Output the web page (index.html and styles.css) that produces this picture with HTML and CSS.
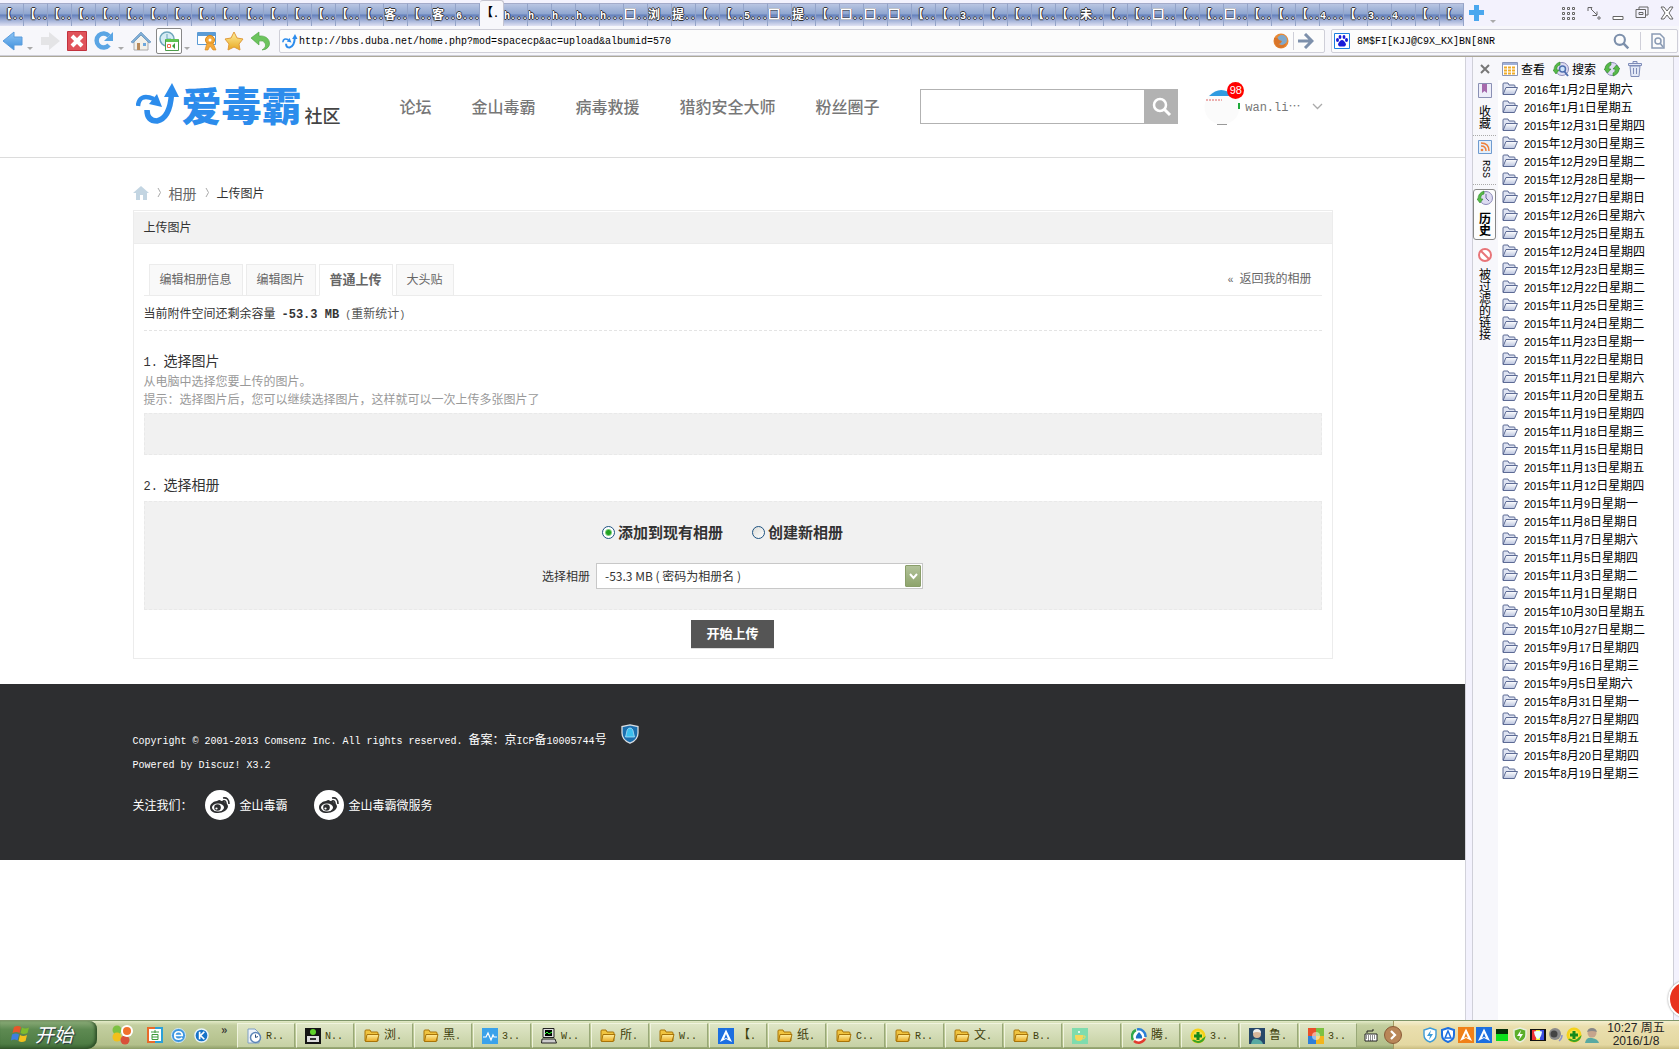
FILE: index.html
```html
<!DOCTYPE html>
<html lang="zh-CN">
<head>
<meta charset="utf-8">
<title>上传图片</title>
<link rel="stylesheet" href="styles.css">
</head>
<body>
<svg class="defs" aria-hidden="true">
  <linearGradient id="gBlue" x1="0" y1="0" x2="0" y2="1"><stop offset="0" stop-color="#8fc6f5"/><stop offset="1" stop-color="#3f8fdc"/></linearGradient>
  <linearGradient id="gGold" x1="0" y1="0" x2="0" y2="1"><stop offset="0" stop-color="#fff0a0"/><stop offset="1" stop-color="#e8a820"/></linearGradient>
  <linearGradient id="gFold" x1="0" y1="0" x2="0" y2="1"><stop offset="0" stop-color="#fff"/><stop offset="1" stop-color="#b9c3de"/></linearGradient>
  <symbol id="folder" viewBox="0 0 16 14"><path d="M1 12V2q0-1 1-1h4l1 2h5q1 0 1 1v1" fill="#dfe4f2" stroke="#5c6a94"/><path d="M1 12.500L4 5.500h11.500L12.500 12.500z" fill="url(#gFold)" stroke="#5c6a94"/></symbol>
  <symbol id="t-folder" viewBox="0 0 16 16"><path d="M1 13V3q0-1 1-1h4l1 2h6q1 0 1 1v8z" fill="#f0c440" stroke="#a87408"/><path d="M1.500 13.500L3 6.500h12L13 13.500z" fill="url(#gGold)" stroke="#a87408"/></symbol>
  <symbol id="t-doc" viewBox="0 0 16 16"><path d="M2 1h7l4 4v10H2z" fill="#eef4fb" stroke="#7f9fc4"/><circle cx="9.500" cy="9.500" r="5" fill="#fff" stroke="#5d86b8" stroke-width="1.500"/><path d="M9.500 6.500v3l2.500-1" fill="none" stroke="#2a4f80"/></symbol>
  <symbol id="t-note" viewBox="0 0 16 16"><path d="M0 0h16v16H0z" fill="#151515"/><circle cx="8" cy="4" r="3" fill="#5fd32a"/><path d="M2 8h12v6H2z" fill="#ddd"/><path d="M5 10h6v2H5z" fill="#333"/></symbol>
  <symbol id="t-chart" viewBox="0 0 16 16"><path d="M0 0h16v16H0z" fill="#3aa2ea"/><path d="M1 9h3l2-4 3 7 2-5 1 2h3" fill="none" stroke="#fff" stroke-width="1.200"/></symbol>
  <symbol id="t-pc" viewBox="0 0 16 16"><path d="M2 .5h11v9H2z" fill="#ddd" stroke="#222"/><path d="M4 2h7v6H4z" fill="#000"/><path d="M4 6l2-2 2 2 3-2" fill="none" stroke="#3f3"/><path d="M1 11h13l1.500 4H.5z" fill="#ccc" stroke="#222"/></symbol>
  <symbol id="t-duba" viewBox="0 0 16 16"><path d="M0 0h16v16H0z" fill="#1c6fe0"/><path d="M8 1.500L14 14l-6-3-6 3z" fill="#fff"/><path d="M8 6l2 5-2-1-2 1z" fill="#1c6fe0"/></symbol>
  <symbol id="t-orange" viewBox="0 0 16 16"><path d="M0 0h16v16H0z" fill="#f08018"/><path d="M8 1.500L14 14l-6-3-6 3z" fill="#fff"/><path d="M8 6l2 5-2-1-2 1z" fill="#f08018"/></symbol>
  <symbol id="t-tea" viewBox="0 0 16 16"><path d="M0 0h16v16H0z" fill="#7fdcae"/><path d="M3 7h8v2q0 4-4 4t-4-4z" fill="#f6d75c"/><path d="M11 8h2q1 2-2 3" fill="none" stroke="#f6d75c"/><circle cx="7" cy="4" r="1" fill="#fff"/></symbol>
  <symbol id="t-tx" viewBox="0 0 16 16"><circle cx="8" cy="8" r="6.500" fill="#fff"/><path d="M2 12A7 7 0 0 1 5 2" fill="none" stroke="#2fa84a" stroke-width="2.500"/><path d="M6 1.500A7 7 0 0 1 14.500 9" fill="none" stroke="#2b7fd6" stroke-width="2.500"/><path d="M14 10.500A7 7 0 0 1 3 13" fill="none" stroke="#e23b2e" stroke-width="2.500"/><path d="M8 4q4 4 3 6.500H5Q4 8 8 4z" fill="#1e6fc4"/></symbol>
  <symbol id="t-plus" viewBox="0 0 16 16"><circle cx="8" cy="8" r="7.500" fill="#f5d21a"/><path d="M2 12A7.500 7.500 0 0 0 15.500 8q-3 4-7 3z" fill="#3ba427"/><circle cx="8" cy="8" r="5" fill="#f9e14a"/><path d="M6.500 4h3v2.500H12v3H9.500V12h-3V9.500H4v-3h2.500z" fill="#158a1c"/></symbol>
  <symbol id="t-man" viewBox="0 0 16 16"><path d="M0 0h16v16H0z" fill="#27486a"/><circle cx="8" cy="6" r="4" fill="#d9b69b"/><path d="M4 5q0-4 4-4t4 4q-4-2-8 0z" fill="#eee"/><path d="M2 16q1-6 6-5t6 5z" fill="#58a9a2"/></symbol>
  <symbol id="t-man2" viewBox="0 0 16 16"><circle cx="8" cy="6" r="4.500" fill="#c6a58c"/><path d="M3 5q1-4 5-4t5 4q-5-2-10 0z" fill="#888"/><path d="M1 16q1-6 7-5t7 5z" fill="#58a9a2"/></symbol>
  <symbol id="t-colour" viewBox="0 0 16 16"><path d="M0 0h8v8H0z" fill="#e8502a"/><path d="M8 0h8v8H8z" fill="#7cc142"/><path d="M0 8h8v8H0z" fill="#2f7fd8"/><path d="M8 8h8v8H8z" fill="#f2b51d"/><circle cx="8" cy="8" r="4" fill="#fff" opacity=".5"/></symbol>
  <symbol id="s-bolt" viewBox="0 0 16 16"><path d="M8 1l6 2v5q0 5-6 7-6-2-6-7V3z" fill="#fff" stroke="#3d9bd8" stroke-width="1.400"/><path d="M9 3L5 9h3l-1 4 4-6H8z" fill="#3d9bd8"/></symbol>
  <symbol id="s-duba" viewBox="0 0 16 16"><path d="M8 1l6 2v5q0 5-6 7-6-2-6-7V3z" fill="#fff" stroke="#1c6fe0" stroke-width="2"/><path d="M8 4l3 7H5z" fill="none" stroke="#1c6fe0" stroke-width="1.500"/></symbol>
  <symbol id="s-meter" viewBox="0 0 16 16"><path d="M2 2h12v12H2z" fill="#0be01c"/><path d="M2 2h12v5H2z" fill="#042f08"/></symbol>
  <symbol id="s-green" viewBox="0 0 16 16"><path d="M8 1l6 2v5q0 5-6 7-6-2-6-7V3z" fill="#5cae2a" stroke="#e9efe0" stroke-width="1.500"/><path d="M9 3L5 9h3l-1 4 4-6H8z" fill="#fff"/></symbol>
  <symbol id="s-screen" viewBox="0 0 16 16"><path d="M0 2h16v12H0z" fill="#111"/><path d="M2 3h4v10H2z" fill="#e33"/><path d="M6 3h4v10H6z" fill="#ee3"/><path d="M10 3h4v10h-4z" fill="#3c4ee0"/><path d="M8 4q4 0 4 1-1 6-4 7-3-1-4-7 0-1 4-1z" fill="#eaffff"/></symbol>
  <symbol id="s-sound" viewBox="0 0 16 16"><circle cx="7" cy="7" r="6" fill="#8a8a8a"/><circle cx="6" cy="7" r="3.500" fill="#444"/><path d="M11 14q3-2 3-6" fill="none" stroke="#8d93c8" stroke-width="1.500"/></symbol>
  <symbol id="weibo" viewBox="0 0 30 30"><circle cx="15" cy="15" r="15" fill="#fff"/><path d="M12 11q3-2 4 0 4-1 4 2 3 1 3 3c0 4-5 7-10 7s-8-2-8-6c0-3 4-6 7-6z" fill="#2d2e30"/><ellipse cx="13" cy="17.500" rx="6" ry="4" fill="#fff"/><circle cx="12.500" cy="17.500" r="3.300" fill="#2d2e30"/><circle cx="11.500" cy="18.500" r="1.100" fill="#fff"/><path d="M18 8q6-1 6 6M18 11q3-1 3 3" fill="none" stroke="#2d2e30" stroke-width="1.600"/></symbol>
  <symbol id="swirl" viewBox="0 0 44 42"><path d="M2 23Q3 10 18 16" fill="none" stroke="#2c8cec" stroke-width="4.500"/><path d="M21 11l5 13-13-3z" fill="#2c8cec"/><path d="M11 27q0 11 10 11 13-3 14.500-27" fill="none" stroke="#2c8cec" stroke-width="5.500"/><path d="M28 14L36 0l7 14z" fill="#2c8cec"/></symbol>
  <symbol id="glass" viewBox="0 0 20 20"><circle cx="8" cy="8" r="6" fill="none" stroke="currentColor" stroke-width="2.500"/><path d="M12 12l6 6" stroke="currentColor" stroke-width="3"/></symbol>
  <symbol id="h-clock" viewBox="0 0 16 16"><circle cx="9" cy="8" r="6.500" fill="#dedcf2" stroke="#8c8ab8"/><path d="M9 4v4l3 3" fill="none" stroke="#66649a"/><path d="M7 1v3Q3 5 4 9H6L3 13 0 9h1Q1 3 7 1z" fill="#56b947" stroke="#2f8a2a" stroke-width=".6"/></symbol>
  <symbol id="h-search" viewBox="0 0 16 16"><circle cx="9" cy="8" r="6.500" fill="#dedcf2" stroke="#8c8ab8"/><circle cx="9.500" cy="8" r="3" fill="#cfe4fa" stroke="#4f6fb0" stroke-width="1.500"/><path d="M11.500 10.500L15 15" stroke="#4f6fb0" stroke-width="2"/><path d="M7 1v3Q3 5 4 9H6L3 13 0 9h1Q1 3 7 1z" fill="#56b947" stroke="#2f8a2a" stroke-width=".6"/></symbol>
  <symbol id="h-refresh" viewBox="0 0 16 16"><circle cx="8" cy="8" r="6.500" fill="#dedcf2" stroke="#8c8ab8"/><path d="M7 1v3Q4 5 5 8H7L3.500 12 0 8h1Q1 3 7 1z" fill="#56b947" stroke="#2f8a2a" stroke-width=".6"/><path d="M9 15v-3q3-1 2-4H9l3.500-4L16 8h-1q0 5-6 7z" fill="#56b947" stroke="#2f8a2a" stroke-width=".6"/></symbol>
</svg>

<nav class="tabstrip" aria-label="标签页">
  <div class="tabs" id="tabs"></div>
  <button class="plain newtab" aria-label="新标签"><svg width="15" height="16" viewBox="0 0 15 16"><path d="M5 0h5v5h5v5h-5v6H5v-6H0V5h5z" fill="#4aa7ee"/></svg></button>
  <i class="tick"></i>
  <div class="winbtns">
    <button class="plain" aria-label="菜单"><svg width="14" height="14" viewBox="0 0 14 14" fill="#fff" stroke="#666"><path d="M.5 1.500h2v2h-2zM5.500 1.500h2v2h-2zM10.500 1.500h2v2h-2zM.5 6.500h2v2h-2zM5.500 6.500h2v2h-2zM10.500 6.500h2v2h-2zM.5 11.500h2v2h-2zM5.500 11.500h2v2h-2zM10.500 11.500h2v2h-2z"/></svg></button>
    <button class="plain" aria-label="停靠"><svg width="14" height="14" viewBox="0 0 14 14" fill="none" stroke="#666"><path d="M1 5V1.500h4L4 3l6 6V5.500M10 9.500H5.500"/><circle cx="12" cy="12" r="1.200"/></svg></button>
    <button class="plain" aria-label="最小化"><svg width="12" height="14" viewBox="0 0 12 14"><path d="M1 10.500h10v3H1z" fill="#fff" stroke="#666"/></svg></button>
    <button class="plain" aria-label="还原"><svg width="14" height="14" viewBox="0 0 14 14" fill="none" stroke="#666"><path d="M4 3V1h9v8h-2M1 3.500h9.500v8H1zM4 6.500h4v2H4z"/></svg></button>
    <button class="plain" aria-label="关闭"><svg width="14" height="14" viewBox="0 0 14 14"><path d="M1 1h3l3 4 3-4h3L9 7l4 6h-3L7 9l-3 4H1l4-6z" fill="#fff" stroke="#666"/></svg></button>
  </div>
</nav>

<div class="toolbar">
  <div class="tools">
    <button class="plain" aria-label="后退"><svg width="20" height="20" viewBox="0 0 20 20"><path d="M0 10L11 1v5h8v8h-8v5z" fill="url(#gBlue)" stroke="#5a9cdc"/></svg></button><i class="tick"></i>
    <button class="plain" aria-label="前进"><svg width="20" height="20" viewBox="0 0 20 20"><path d="M20 10L9 1v5H1v8h8v5z" fill="#e4e4e6"/></svg></button>
    <button class="plain" aria-label="停止"><svg width="20" height="20" viewBox="0 0 20 20"><path d="M.5.5h19v19H.5z" fill="#e0525a" stroke="#c2323e"/><path d="M5 5l10 10M15 5L5 15" stroke="#fff" stroke-width="4"/></svg></button>
    <button class="plain" aria-label="刷新"><svg width="20" height="20" viewBox="0 0 20 20"><path d="M15 14a7 7 0 1 1 0-9" fill="none" stroke="#5aa5e4" stroke-width="4.500"/><path d="M19 1v9h-9z" fill="#5aa5e4"/></svg></button><i class="tick"></i>
    <button class="plain" aria-label="主页"><svg width="20" height="20" viewBox="0 0 20 20"><path d="M3 10v9h14v-9l-7-6z" fill="#f3f1ea" stroke="#aaa"/><path d="M0 11L10 1l10 10-2 1-8-8-8 8z" fill="#7faed6" stroke="#5b8cb8" stroke-width=".6"/><path d="M6 12h3v7H6z" fill="#b88a5a"/><path d="M12 12h3v3h-3z" fill="#6fa8dc"/></svg></button>
    <button class="plain boxed" aria-label="历史"><svg width="20" height="20" viewBox="0 0 20 20"><circle cx="8" cy="8" r="7" fill="#d6ecf4" stroke="#6fa6bc" stroke-width="1.500"/><path d="M8 3v5h4" fill="none" stroke="#6fa6bc"/><path d="M6.500 8.500h13v11h-13z" fill="#fff" stroke="#4d9d4a"/><path d="M7 8h12v3H7z" fill="#5fc450"/><path d="M8.500 13.500h3v3h-3z" fill="#fff" stroke="#f06a4a"/><path d="M13 15l3-3v6z" fill="#3b9e3a"/></svg></button><i class="tick"></i>
    <button class="plain" aria-label="认证"><svg width="20" height="20" viewBox="0 0 20 20"><path d="M.5 1.500h18v12H.5z" fill="#fff" stroke="#5b9bd5"/><path d="M1 2h17v3H1z" fill="#5b9bd5"/><circle cx="13" cy="9" r="4.500" fill="#f4a93a" stroke="#d58416"/><circle cx="13" cy="9" r="1.500" fill="#fff"/><path d="M10 12l-2 7h3l2-4 3 4h3l-3-7z" fill="#f4a93a" stroke="#d58416" stroke-width=".6"/></svg></button>
    <button class="plain" aria-label="收藏"><svg width="20" height="20" viewBox="0 0 20 20"><path d="M10 1l3 6 6 1-4 5 1 6-6-3-6 3 1-6-4-5 6-1z" fill="url(#gGold)" stroke="#e09a3a"/></svg></button>
    <button class="plain" aria-label="撤销"><svg width="20" height="20" viewBox="0 0 20 20"><path d="M0 7l8-6v4c8-1 12 5 10 10q-2 4-7 4 5-3 3-7-2-3-6-2v4z" fill="#6cc45e" stroke="#4aa03e" stroke-width=".6"/></svg></button>
  </div>
  <form class="field address">
    <svg width="16" height="15"><use href="#swirl"/></svg>
    <input class="lat" type="text" aria-label="地址" value="http://bbs.duba.net/home.php?mod=spacecp&amp;ac=upload&amp;albumid=570">
    <svg width="16" height="16" viewBox="0 0 16 16"><circle cx="8" cy="8" r="7.500" fill="#e98a35"/><circle cx="9" cy="7" r="5" fill="#7fa8cc"/><path d="M1 5q4-1 5 2l3 1q-1 3-4 3 4 3 8-1-1 5-6 5Q1 14 1 5z" fill="#d9752a"/></svg>
    <i class="vsep"></i>
    <button class="plain" type="button" aria-label="转到"><svg width="16" height="16" viewBox="0 0 16 16" fill="none" stroke="#7d90ab" stroke-width="3"><path d="M0 8h13M7 1l7 7-7 7"/></svg></button>
  </form>
  <form class="field websearch">
    <svg width="16" height="16" viewBox="0 0 16 16"><path d="M.5.5h15v15H.5z" fill="#fff" stroke="#1c7fe0"/><g fill="#1a1ad8"><ellipse cx="3.500" cy="7" rx="1.500" ry="2"/><ellipse cx="6" cy="4" rx="1.400" ry="2"/><ellipse cx="10" cy="4" rx="1.400" ry="2"/><ellipse cx="12.500" cy="7" rx="1.500" ry="2"/><path d="M8 7q2 0 4 4 0 3-4 2.500Q4 14 4 11q2-4 4-4z"/></g></svg>
    <input class="lat" type="text" aria-label="搜索网络" value="8M$FI[KJJ@C9X_KX]BN[8NR">
    <svg class="slate" width="17" height="17"><use href="#glass"/></svg>
    <i class="vsep"></i>
    <svg width="14" height="16" viewBox="0 0 14 16" fill="none" stroke="#8a9bb4" stroke-width="1.500"><path d="M1 1h8l4 4v10H1z"/><circle cx="7" cy="8" r="3"/><path d="M9 10l3 4"/></svg>
  </form>
</div>

<div class="main">
  <main class="page">
    <header class="site-head"><div class="wrap head-row">
      <a class="logo" href="#"><svg width="44" height="42"><use href="#swirl"/></svg><b>爱毒霸</b><span>社区</span></a>
      <nav class="site-nav"><a href="#">论坛</a><a href="#">金山毒霸</a><a href="#">病毒救援</a><a href="#">猎豹安全大师</a><a href="#">粉丝圈子</a></nav>
      <form class="site-search"><input type="text" aria-label="搜索"><button type="button" aria-label="搜索"><svg width="20" height="20"><use href="#glass"/></svg></button></form>
      <div class="user">
        <span class="avatar"><svg width="36" height="36" viewBox="0 0 36 36"><circle cx="18" cy="18" r="17.500" fill="#fbfbfb"/><path d="M5 7q12-12 25 0z" fill="#2f9be0"/><path d="M2 11h16" stroke="#d66" stroke-dasharray="2 1"/><path d="M34 14h2v6h-2z" fill="#1faa3a"/><path d="M13 35.500h10" stroke="#999"/></svg><em>98</em></span>
        <a class="name" href="#">wan.li<span>…</span></a>
        <svg width="11" height="7" viewBox="0 0 11 7"><path d="M1 1l4.500 4.500L10 1" fill="none" stroke="#aaa" stroke-width="1.300"/></svg>
      </div>
    </div></header>

    <div class="wrap">
      <nav class="crumbs">
        <a href="#" aria-label="首页"><svg width="16" height="14" viewBox="0 0 16 14"><path d="M8 0l8 7h-2v7h-4v-5H7v5H3V7H0z" fill="#c3d5e2"/></svg></a>
        <svg width="10" height="9" viewBox="0 0 10 9"><path d="M4 0l2.500 4.500L4 9" fill="none" stroke="#aaa"/></svg><a class="big" href="#">相册</a><svg width="10" height="9" viewBox="0 0 10 9"><path d="M4 0l2.500 4.500L4 9" fill="none" stroke="#aaa"/></svg><span>上传图片</span>
      </nav>
      <section class="card">
        <h1>上传图片</h1>
        <div class="body">
          <div class="subtabs"><a href="#">编辑相册信息</a><a href="#">编辑图片</a><a class="on" href="#">普通上传</a><a href="#">大头贴</a><a class="back" href="#"><span class="lat">« </span>返回我的相册</a></div>
          <p class="quota">当前附件空间还剩余容量<b class="lat">-53.3 MB</b><a href="#"><span class="lat">(</span>重新统计<span class="lat">)</span></a></p>
          <h2><span>1.</span>选择图片</h2>
          <p class="hint">从电脑中选择您要上传的图片。</p>
          <p class="hint">提示：选择图片后，您可以继续选择图片，这样就可以一次上传多张图片了</p>
          <div class="well drop"></div>
          <h2><span>2.</span>选择相册</h2>
          <div class="well">
            <div class="modes"><label><input type="radio" name="mode" checked>添加到现有相册</label><label><input type="radio" name="mode">创建新相册</label></div>
            <div class="pick"><label for="album">选择相册</label><span class="sel"><select id="album"><option>-53.3 MB ( 密码为相册名 )</option></select><i><svg width="9" height="7" viewBox="0 0 9 7"><path d="M1 1l3.500 4L8 1" fill="none" stroke="#fff" stroke-width="2"/></svg></i></span></div>
          </div>
          <button class="submit" type="button">开始上传</button>
        </div>
      </section>
    </div>

    <footer class="foot"><div class="wrap">
      <div class="line1"><p><span class="lat">Copyright © 2001-2013 Comsenz Inc. All rights reserved. </span></p><p>备案：京<span class="lat">ICP</span>备<span class="lat">10005744</span>号</p>
        <svg width="18" height="20" viewBox="0 0 18 20"><path d="M9 .8l8 1.700V9q0 7-8 10.200Q1 16 1 9V2.500z" fill="#1b6fae" stroke="#d8dde2" stroke-width="1.300"/><path d="M9 4q3 0 3.500 5l1 4H4.500l1-4Q6 4 9 4z" fill="#3cc0ef" stroke="#bdeaff" stroke-width=".7"/></svg></div>
      <p class="lat">Powered by Discuz! X3.2</p>
      <div class="follow"><span>关注我们：</span><a href="#"><svg width="30" height="30"><use href="#weibo"/></svg>金山毒霸</a><a href="#"><svg width="30" height="30"><use href="#weibo"/></svg>金山毒霸微服务</a></div>
    </div></footer>
  </main>

  <aside class="side">
    <div class="side-bar">
      <button class="plain close" aria-label="关闭侧栏"><svg width="10" height="10" viewBox="0 0 10 10"><path d="M1 1l8 8M9 1L1 9" stroke="#777" stroke-width="2"/></svg></button>
      <button class="plain"><svg width="16" height="14" viewBox="0 0 16 14"><path d="M.5.500h15v13H.5z" fill="#fff" stroke="#8a96b8"/><path d="M1 1h14v2H1z" fill="#9fb0d8"/><path d="M2 5.500h12M2 8.500h12M2 11.500h12" stroke="#f0ac28" stroke-width="2" stroke-dasharray="3 1"/></svg>查看</button>
      <button class="plain"><svg width="16" height="16"><use href="#h-search"/></svg>搜索</button>
      <button class="plain" aria-label="刷新历史"><svg width="16" height="16"><use href="#h-refresh"/></svg></button>
      <button class="plain" aria-label="删除"><svg width="14" height="16" viewBox="0 0 14 16"><path d="M.5 2.500h13v2H.5zM5 2.500v-2h4v2M2 5l1 10.500h8L12 5zM5.500 7v6M8.500 7v6" fill="#e3e8f6" stroke="#7f8cb8"/></svg></button>
    </div>
    <div class="side-main">
      <nav class="side-tabs">
        <a href="#"><svg width="14" height="16" viewBox="0 0 14 16"><path d="M.5.5h13v14H.5z" fill="#eeeefa" stroke="#8a90b4"/><path d="M4 1h5v9L6.500 8 4 10z" fill="#a569ac"/></svg><span>收藏</span></a>
        <a href="#"><svg width="14" height="14" viewBox="0 0 14 14"><path d="M.5.5h13v13H.5z" fill="#e4effb" stroke="#6f9bd0"/><path d="M3 6q5 0 5 5M3 3q8 0 8 8" fill="none" stroke="#f0803a" stroke-width="1.500"/><circle cx="4" cy="10" r="1.300" fill="#f0803a"/></svg><span class="lat">RSS</span></a>
        <a class="on" href="#"><svg width="16" height="16"><use href="#h-clock"/></svg><span>历史</span></a>
        <a href="#"><svg width="14" height="14" viewBox="0 0 14 14"><circle cx="7" cy="7" r="6" fill="#fff" stroke="#e87478" stroke-width="2"/><path d="M3 3l8 8" stroke="#e87478" stroke-width="2"/></svg><span>被过滤的链接</span></a>
      </nav>
      <ul class="history" id="history"></ul>
    </div>
  </aside>
  <span class="ball"></span>
</div>

<footer class="taskbar">
  <button class="start"><svg width="20" height="20" viewBox="0 0 20 20"><path d="M3 3q4-2 7 0L8.500 9q-3-2-7 0z" fill="#e8562a"/><path d="M11 3.500q3 2 7 0L16.500 9q-4 2-7 0z" fill="#7dbb2e"/><path d="M1 10.500q4-2 7 0l-1.500 6q-3-2-6.500 0z" fill="#3f7fe0"/><path d="M9 11q3 2 7 0l-1.500 6q-4 2-7 0z" fill="#f2c01c"/></svg>开始</button>
  <div class="quick">
    <svg width="22" height="20" viewBox="0 0 22 20"><circle cx="5" cy="5" r="4.500" fill="#7cc142"/><circle cx="5" cy="12" r="4.500" fill="#f2c01c"/><circle cx="13" cy="15" r="4.500" fill="#d8503a"/><circle cx="15" cy="6" r="6" fill="#fff"/><circle cx="15" cy="6" r="4" fill="#f0702a"/></svg>
    <svg class="q2" width="16" height="16" viewBox="0 0 16 16"><path d="M0 0h8v16H0z" fill="#e86a2a"/><path d="M8 0h8v16H8z" fill="#2ba0d8"/><path d="M2 2h12v12H2z" fill="#fff"/><path d="M4 5h8M8 3v3M5 7.500h6v5H5zM5 10h6" fill="none" stroke="#3c9a3a"/></svg>
    <svg width="15" height="15" viewBox="0 0 16 16"><circle cx="8" cy="8" r="7.500" fill="#3f97e0" stroke="#dceefc"/><path d="M4 8h8q0-4-4-4t-4 4 4 4q2 0 4-1.500" fill="none" stroke="#fff" stroke-width="1.800"/></svg>
    <svg width="15" height="15" viewBox="0 0 16 16"><circle cx="8" cy="8" r="7" fill="#1673c8" stroke="#e8f4fc" stroke-width="1.500"/><path d="M6 4v8M11 4L7 8l4 4" fill="none" stroke="#fff" stroke-width="1.800"/></svg>
    <span>»</span>
  </div>
  <div class="tasks" id="tasks"></div>
  <div class="lang"><svg width="14" height="14" viewBox="0 0 14 14"><path d="M1 6h12v7H1z" fill="#fff" stroke="#222"/><path d="M2 8h10M2 10h10M4 12h6" stroke="#222" stroke-dasharray="1 1"/><path d="M3 5V3h6V1" fill="none" stroke="#222"/></svg>
    <svg width="18" height="18" viewBox="0 0 18 18"><circle cx="9" cy="9" r="8.500" fill="#b98658" stroke="#8a5c38"/><path d="M7 5l4 4-4 4" fill="none" stroke="#fff" stroke-width="2.200"/></svg></div>
  <div class="tray"><div class="trayicons" id="tray"></div><time>10:27 周五<br>2016/1/8</time></div>
</footer>
<script src="app.js"></script>
</body>
</html>
```
FILE: styles.css
```css
* { box-sizing: border-box; }
body { margin: 0; min-height: 100vh; display: flex; flex-direction: column; background: #f3f2fd; color: #333; font: 12px/18px "Noto Sans CJK SC", sans-serif; }
p, h1, h2, ul { margin: 0; padding: 0; }
a { color: inherit; text-decoration: none; }
svg { display: block; flex: none; }
.defs { position: absolute; width: 0; height: 0; }
input, select, button { font: inherit; color: inherit; }
.lat { font-family: "Liberation Mono", monospace; font-size: 10px; }
.plain { background: none; border: 0; padding: 0; display: flex; align-items: center; }
.tick { width: 0; height: 0; border: 3px solid transparent; border-top-color: #aaa; border-bottom: 0; }

/* browser tabs */
.tabstrip { display: flex; align-items: center; height: 26px; }
.tabs { display: flex; align-items: flex-end; height: 26px; min-width: 0; }
.tab { flex: 0 1 24px; width: 24px; height: 23px; padding: 0; border: 0; border-top: 1px solid #a4abc9; border-right: 1px solid #93a3c8; background: linear-gradient(#b9c5e2, #8fa6d0 45%, #6480bb 50%, #a3b2d8 75%, #dfe1f3); color: #fff; font-weight: 700; text-align: left; white-space: nowrap; overflow: hidden; line-height: 20px; text-shadow: 1px 0 #333, -1px 0 #333, 0 1px #333, 0 -1px #333; }
.tab .box { -webkit-text-stroke: 1px #fff; }
.tab.on { height: 26px; background: #f7f7fb; color: #000; text-shadow: none; border-color: #c4c4d0; border-radius: 3px 3px 0 0; padding-left: 1px; }
.newtab { margin: 0 6px 0 5px; }
.tabstrip > .tick { margin-top: 16px; }
.winbtns { display: flex; gap: 11px; margin-left: auto; padding-right: 5px; }

/* toolbar */
.toolbar { display: flex; align-items: center; gap: 6px; height: 31px; padding: 0 1px 0 3px; background: #f7f7fb; border-bottom: 1px solid #aca899; box-shadow: inset 0 -1px #cfcfd8; }
.tools { display: flex; align-items: center; gap: 7px; width: 270px; }
.tools .tick { margin: 14px 0 0 -3px; }
.boxed { border: 1px solid #888; border-radius: 2px; background: #fff; width: 26px; height: 26px; justify-content: center; margin: 0 -2px; }
.field { display: flex; align-items: center; height: 24px; background: #fcfcfc; border: 1px solid #cfcfd8; border-radius: 2px; }
.field input { flex: 1; min-width: 0; border: 0; padding: 1px 0 0; background: none; color: #000; }
.address { flex: 1; gap: 1px; padding: 0 10px 0 2px; }
.vsep { width: 1px; height: 18px; background: #cfcfd8; margin: 0 3px; }
.websearch { width: 347px; gap: 7px; padding: 0 12px 0 2px; }
.slate { color: #7d90ab; }

/* layout */
.main { flex: 1; display: flex; position: relative; overflow: hidden; }
.page { flex: 1; min-width: 0; background: #fff; border-right: 1px solid #d2d2da; }
.wrap { max-width: 1200px; margin: 0 auto; }

.site-head { padding: 32px 0 33px; border-bottom: 1px solid #dcdcdc; }
.head-row { display: flex; align-items: center; padding: 0 10px 0 3px; height: 35px; }
.logo { display: flex; align-items: center; width: 264px; padding-bottom: 6px; }
.logo b { margin: 0 3px 0 2px; font-size: 40px; line-height: 40px; font-weight: 900; color: #2c8cec; }
.logo span { font-size: 18px; align-self: flex-end; line-height: 20px; color: #444; font-weight: 500; }
.site-nav { display: flex; gap: 40px; padding-bottom: 2px; font-size: 16px; line-height: 24px; font-weight: 500; color: #777; white-space: nowrap; }
.site-search { display: flex; width: 258px; height: 35px; margin: 0 26px 0 auto; }
.site-search input { flex: 1; min-width: 0; border: 1px solid #b2b2b2; border-right: 0; }
.site-search button { width: 34px; border: 0; padding: 0 0 0 8px; background: #b2b2b2; color: #fff; }
.user { display: flex; align-items: center; }
.avatar { position: relative; margin-right: 5px; }
.avatar em { position: absolute; top: -7px; right: -4px; width: 17px; height: 17px; border-radius: 50%; background: #f00; color: #fff; font: 11px/17px "Liberation Sans", sans-serif; text-align: center; }
.name { font: 12px/18px "Liberation Mono", monospace; color: #777; margin-right: 11px; white-space: nowrap; }
.name span { font-family: "Noto Sans CJK SC", sans-serif; }

.crumbs { display: flex; align-items: center; gap: 5px; height: 52px; padding: 17px 0 0; }
.crumbs .big { font-size: 14px; color: #666; }
.card { border: 1px solid #ececec; padding-top: 1px; }
.card h1 { padding: 6px 10px 7px; font-size: 12px; line-height: 18px; font-weight: 400; background: #f2f2f2; border-bottom: 1px solid #ececec; }
.body { padding: 20px 10px 10px; }
.subtabs { display: flex; gap: 3px; height: 32px; padding-left: 5px; border-bottom: 1px solid #ececec; color: #666; }
.subtabs a { height: 32px; padding: 0 10px; line-height: 28px; background: #f9f9f9; border: 1px solid #ececec; }
.subtabs .on { background: #fff; border-bottom-color: #fff; font-size: 13px; font-weight: 700; }
.subtabs .back { margin-left: auto; background: none; border: 0; }
.quota { display: flex; align-items: baseline; gap: 6px; height: 35px; line-height: 33px; border-bottom: 1px dashed #e4e4e4; }
.quota b.lat { font-size: 12px; }
.quota a { color: #555; }
h2 { display: flex; align-items: baseline; height: 22px; margin-top: 19px; font-size: 14px; line-height: 21px; font-weight: 400; }
h2 span { width: 20px; font-family: "Liberation Mono", monospace; font-size: 12px; }
.hint { color: #999; }
.well { margin-top: 5px; padding: 20px 0; background: #f1f1f1; border: 1px dashed #e9e9e9; }
.drop { height: 42px; }
.modes { display: flex; justify-content: center; gap: 29px; padding-right: 20px; font-size: 15px; line-height: 20px; font-weight: 700; }
.modes label { display: flex; align-items: center; gap: 3px; }
.modes input { appearance: none; width: 13px; height: 13px; margin: 0; border: 1px solid #1c5180; border-radius: 50%; background: linear-gradient(135deg, #dcdcd7, #fff); }
.modes input:checked { background: radial-gradient(circle, #21a121 0 2px, #7ccf7c 3px, #fff 4px); }
.pick { display: flex; justify-content: center; align-items: center; gap: 6px; margin-top: 21px; line-height: 20px; }
.sel { display: flex; width: 327px; height: 26px; background: #fff; border: 1px solid #c8c8c8; }
.sel select { flex: 1; min-width: 0; appearance: none; border: 0; padding: 0 8px; background: none; }
.sel i { width: 16px; margin: 1px; display: flex; align-items: center; justify-content: center; background: linear-gradient(#b2c29a, #8ea46c); border: 1px solid #8a9e6a; border-radius: 1px; }
.submit { display: block; margin: 10px auto 0; height: 28px; padding: 0 15px 2px; border: 0; background: #555; color: #fff; font-size: 13px; font-weight: 700; box-shadow: 0 1px #ddd; }

.foot { margin-top: 25px; padding: 40px 0; background: #2d2e30; color: #fff; }
.foot p { line-height: 24px; }
.line1 { display: flex; align-items: flex-end; height: 30px; gap: 6px; }
.line1 svg { align-self: flex-start; margin-left: 8px; }
.follow { display: flex; align-items: center; margin-top: 12px; }
.follow span { width: 72px; }
.follow a { display: flex; align-items: center; gap: 5px; margin-right: 26px; line-height: 30px; }

/* history panel */
.side { width: 202px; margin: 0 5px 0 6px; border: 1px solid #cfcfd8; border-width: 0 1px; display: flex; flex-direction: column; background: #f7f7fb; color: #000; }
.side-bar { display: flex; align-items: center; height: 23px; gap: 8px; }
.side-bar .close { width: 21px; padding-left: 7px; }
.side-bar button { gap: 3px; }
.side-main { flex: 1; display: flex; }
.side-tabs { width: 25px; padding: 3px 2px 3px 0; }
.side-tabs a { display: flex; flex-direction: column; align-items: center; gap: 6px; padding: 0 0 6px; margin-bottom: 4px; border-bottom: 1px dotted #aaa; }
.side-tabs a:last-child { border: 0; }
.side-tabs span { writing-mode: vertical-rl; line-height: 16px; }
.side-tabs .on { border: 1px solid #888; border-radius: 3px; font-weight: 700; padding: 0 0 3px; margin-bottom: 8px; background: #fdfdfd; }
.history { flex: 1; list-style: none; background: #fff; }
.history a { display: flex; align-items: center; gap: 6px; height: 18px; padding-left: 4px; white-space: nowrap; }
.history b { font: 11px "Liberation Sans", sans-serif; }
.ball { position: absolute; right: -27px; bottom: 2px; width: 38px; height: 38px; border-radius: 50%; border: 2px solid #fff; background: #e8331e; box-shadow: 0 0 2px #888; }

/* taskbar */
.taskbar { display: flex; height: 29px; border-top: 1px solid #7f966a; background: linear-gradient(#e3eac8, #c3cfa0 15%, #b3c08b 85%, #8d9d67); }
.start { display: flex; align-items: center; gap: 4px; width: 97px; padding: 0 0 2px 11px; border: 0; border-radius: 0 8px 10px 0; background: linear-gradient(#8bab78, #5e8a52 30%, #4f7d45 80%, #3d6635); box-shadow: inset -2px -1px 3px #2f5028; color: #fff; font-size: 19px; font-style: italic; text-shadow: 1px 1px 1px #234; }
.quick { display: flex; align-items: center; width: 140px; padding-left: 15px; gap: 8px; }
.quick .q2 { margin-left: 5px; }
.quick span { align-self: flex-start; font-weight: 700; line-height: 16px; margin-left: 4px; }
.tasks { display: flex; flex: 0 1 1121px; min-width: 0; }
.task { flex: 1 1 0; min-width: 0; display: flex; align-items: center; gap: 4px; margin: 2px 1px 1px 0; padding: 0 0 0 8px; border: 1px solid #98a877; border-top-color: #f0f4de; border-left-color: #f0f4de; background: linear-gradient(#dfe6c6, #c6d1a4); color: #40400c; white-space: nowrap; overflow: hidden; }
.lang { flex: 1; display: flex; align-items: center; justify-content: flex-end; gap: 6px; padding-right: 1px; }
.lang svg:last-child { margin-right: -10px; position: relative; }
.tray { display: flex; align-items: center; width: 286px; padding-left: 28px; border-left: 1px solid #a39a60; background: linear-gradient(#f5efcf, #eadfae 20%, #e4d8a2 85%, #c9bc80); color: #222; }
.trayicons { display: flex; gap: 2px; width: 184px; }
.tray time { width: 60px; font: 12px/13px "Liberation Sans", "Noto Sans CJK SC", sans-serif; text-align: center; white-space: nowrap; }
```
FILE: app.js
```js
// Latin runs are set in the narrow monospace face, everything else in the CJK face.
const latin = s => s.replace(/[\x20-\x7e]+/g, m => `<span class="lat">${m}</span>`);
const icon = (id, w, h) => `<svg width="${w}" height="${h}"><use href="#${id}"/></svg>`;

const before = '【【【【【【【【【【【【【【【【客【客6';
const after = 'hhhhh□浏提【【5□提【□□□【【3【【【【未【【□【【□【【【4【34【【';
const tab = c => `<button class="tab">${latin(c + (c < '~' ? '...' : '..')).replace('□', '<span class="box">□</span>')}</button>`;
document.getElementById('tabs').innerHTML =
  [...before].map(tab).join('') + `<button class="tab on">${latin('【.')}</button>` + [...after].map(tab).join('');

const days = `2016.1.2六 2016.1.1五 2015.12.31四 2015.12.30三 2015.12.29二 2015.12.28一 2015.12.27日 2015.12.26六
2015.12.25五 2015.12.24四 2015.12.23三 2015.12.22二 2015.11.25三 2015.11.24二 2015.11.23一 2015.11.22日 2015.11.21六
2015.11.20五 2015.11.19四 2015.11.18三 2015.11.15日 2015.11.13五 2015.11.12四 2015.11.9一 2015.11.8日 2015.11.7六
2015.11.5四 2015.11.3二 2015.11.1日 2015.10.30五 2015.10.27二 2015.9.17四 2015.9.16三 2015.9.5六 2015.8.31一
2015.8.27四 2015.8.21五 2015.8.20四 2015.8.19三`.split(/\s+/);
document.getElementById('history').innerHTML = days.map(d => {
  const [, y, m, n, w] = d.match(/(\d+)\.(\d+)\.(\d+)(.)/);
  return `<li><a href="#">${icon('folder', 16, 14)}<span><b>${y}</b>年<b>${m}</b>月<b>${n}</b>日星期${w}</span></a></li>`;
}).join('');

const tasks = [['doc', 'R..'], ['note', 'N..'], ['folder', '浏.'], ['folder', '黑.'], ['chart', '3..'], ['pc', 'W..'],
  ['folder', '所.'], ['folder', 'W..'], ['duba', '【.'], ['folder', '纸.'], ['folder', 'C..'], ['folder', 'R..'],
  ['folder', '文.'], ['folder', 'B..'], ['tea', ''], ['tx', '腾.'], ['plus', '3..'], ['man', '鲁.'], ['colour', '3..']];
document.getElementById('tasks').innerHTML =
  tasks.map(([i, t]) => `<button class="task">${icon('t-' + i, 16, 16)}<span>${latin(t)}</span></button>`).join('');

document.getElementById('tray').innerHTML =
  ['s-bolt', 's-duba', 't-orange', 't-duba', 's-meter', 's-green', 's-screen', 's-sound', 't-plus', 't-man2']
    .map(i => icon(i, 16, 16)).join('');
```
